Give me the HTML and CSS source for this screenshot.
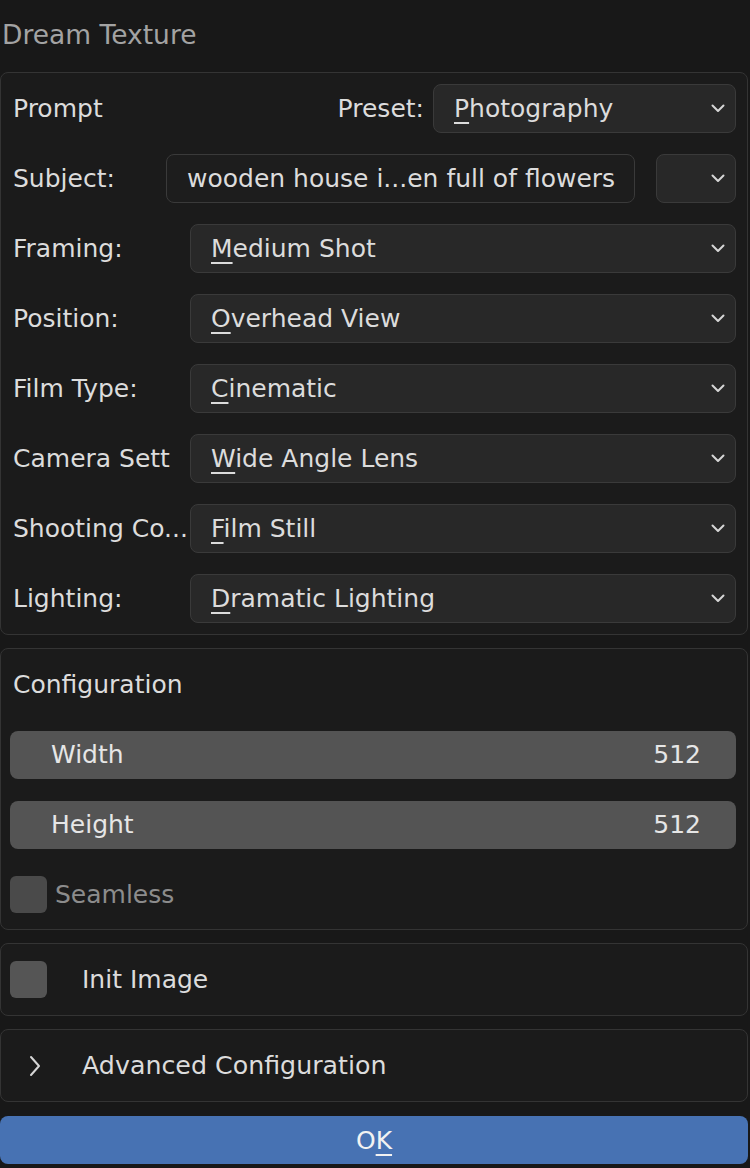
FILE: index.html
```html
<!DOCTYPE html>
<html>
<head>
<meta charset="utf-8">
<link rel="stylesheet" href="styles.css">
</head>
<body>
<div class="title">Dream Texture</div>

<section class="panel prompt-panel">
  <div class="row">
    <span class="label">Prompt</span>
    <span class="preset-label">Preset:</span>
    <div class="dropdown preset"><span class="val"><u>P</u>hotography</span><svg class="chev" viewBox="0 0 14 9"><path d="M1.5 1.5 L7 7 L12.5 1.5"/></svg></div>
  </div>
  <div class="row">
    <span class="label subject-label">Subject:</span>
    <div class="field subject">wooden house i...en full of flowers</div>
    <div class="dropdown small"><svg class="chev" viewBox="0 0 14 9"><path d="M1.5 1.5 L7 7 L12.5 1.5"/></svg></div>
  </div>
  <div class="row">
    <span class="label wide">Framing:</span>
    <div class="dropdown grow"><span class="val"><u>M</u>edium Shot</span><svg class="chev" viewBox="0 0 14 9"><path d="M1.5 1.5 L7 7 L12.5 1.5"/></svg></div>
  </div>
  <div class="row">
    <span class="label wide">Position:</span>
    <div class="dropdown grow"><span class="val"><u>O</u>verhead View</span><svg class="chev" viewBox="0 0 14 9"><path d="M1.5 1.5 L7 7 L12.5 1.5"/></svg></div>
  </div>
  <div class="row">
    <span class="label wide">Film Type:</span>
    <div class="dropdown grow"><span class="val"><u>C</u>inematic</span><svg class="chev" viewBox="0 0 14 9"><path d="M1.5 1.5 L7 7 L12.5 1.5"/></svg></div>
  </div>
  <div class="row">
    <span class="label wide">Camera Sett</span>
    <div class="dropdown grow"><span class="val"><u>W</u>ide Angle Lens</span><svg class="chev" viewBox="0 0 14 9"><path d="M1.5 1.5 L7 7 L12.5 1.5"/></svg></div>
  </div>
  <div class="row">
    <span class="label wide">Shooting Co...</span>
    <div class="dropdown grow"><span class="val"><u>F</u>ilm Still</span><svg class="chev" viewBox="0 0 14 9"><path d="M1.5 1.5 L7 7 L12.5 1.5"/></svg></div>
  </div>
  <div class="row">
    <span class="label wide">Lighting:</span>
    <div class="dropdown grow"><span class="val"><u>D</u>ramatic Lighting</span><svg class="chev" viewBox="0 0 14 9"><path d="M1.5 1.5 L7 7 L12.5 1.5"/></svg></div>
  </div>
</section>

<section class="panel config-panel">
  <div class="row"><span class="label">Configuration</span></div>
  <div class="row"><div class="numfield"><span>Width</span><span>512</span></div></div>
  <div class="row"><div class="numfield"><span>Height</span><span>512</span></div></div>
  <div class="row"><span class="checkbox dim"></span><span class="check-text dimtext">Seamless</span></div>
</section>

<section class="panel single">
  <span class="checkbox"></span><span class="check-text far">Init Image</span>
</section>

<section class="panel single">
  <svg class="arrow" viewBox="0 0 12 22"><path d="M2 2 L10 11 L2 20"/></svg><span class="check-text adv">Advanced Configuration</span>
</section>

<div class="ok">O<u>K</u></div>
</body>
</html>
```

FILE: styles.css
```css
html, body {
  margin: 0;
  padding: 0;
  background: #181818;
}
body {
  width: 750px;
  height: 1168px;
  font-family: "DejaVu Sans", "Liberation Sans", sans-serif;
  font-size: 25px;
  color: #dcdcdc;
  overflow: hidden;
}
u {
  text-decoration: underline;
  text-decoration-thickness: 2px;
  text-underline-offset: 5px;
}
.title {
  height: 72px;
  box-sizing: border-box;
  padding: 20px 0 0 2px;
  line-height: 30px;
  font-size: 26.5px;
  color: #a3a3a3;
}
.panel {
  margin-right: 2px;
  border: 1.5px solid #343434;
  border-radius: 8px;
  background: #1b1b1b;
  box-sizing: border-box;
}
.panel + .panel { margin-top: 13px; }
.prompt-panel {
  padding: 11px 11px 11px 9px;
  display: flex;
  flex-direction: column;
  gap: 21px;
}
.row {
  display: flex;
  align-items: center;
  height: 49px;
}
.label {
  padding-left: 3px;
  white-space: nowrap;
}
.wide {
  width: 177px;
  flex: none;
}
.subject-label {
  width: 153px;
  flex: none;
}
.preset-label {
  margin-left: auto;
  margin-right: 9px;
}
.dropdown {
  height: 49px;
  box-sizing: border-box;
  background: #282828;
  border: 1.5px solid #3a3a3a;
  border-radius: 8px;
  display: flex;
  align-items: center;
  padding: 0 10px 0 20px;
}
.preset { width: 303px; }
.grow { flex: 1; }
.small {
  flex: 1;
  margin-left: 21px;
  justify-content: flex-end;
}
.val { flex: 1; white-space: nowrap; }
.chev {
  width: 14px;
  height: 9px;
  fill: none;
  stroke: #d6d6d6;
  stroke-width: 2;
  stroke-linecap: round;
  stroke-linejoin: round;
}
.field {
  width: 469px;
  flex: none;
  height: 49px;
  box-sizing: border-box;
  background: #1d1d1d;
  border: 1.5px solid #3a3a3a;
  border-radius: 8px;
  display: flex;
  align-items: center;
  padding-left: 20px;
  white-space: nowrap;
}
.config-panel {
  padding: 11px 11px 10px 9px;
  display: flex;
  flex-direction: column;
  gap: 21px;
}
.numfield {
  flex: 1;
  height: 48px;
  background: #545454;
  border-radius: 8px;
  display: flex;
  align-items: center;
  justify-content: space-between;
  padding: 0 35px 0 41px;
  color: #e6e6e6;
}
.checkbox {
  width: 37px;
  height: 37px;
  flex: none;
  background: #555555;
  border-radius: 6px;
}
.checkbox.dim { background: #4a4a4a; }
.check-text { margin-left: 8px; }
.dimtext { color: #8c8c8c; }
.single {
  height: 73px;
  display: flex;
  align-items: center;
  padding-left: 9px;
}
.far { margin-left: 35px; }
.arrow {
  width: 12px;
  height: 22px;
  margin-left: 19px;
  fill: none;
  stroke: #d6d6d6;
  stroke-width: 2;
  stroke-linecap: round;
  stroke-linejoin: round;
}
.adv { margin-left: 41px; font-size: 25.3px; }
.ok {
  margin-top: 14px;
  margin-right: 2px;
  height: 48px;
  background: #4772b3;
  border-radius: 8px;
  display: flex;
  align-items: center;
  justify-content: center;
  color: #f2f2f2;
}
```
